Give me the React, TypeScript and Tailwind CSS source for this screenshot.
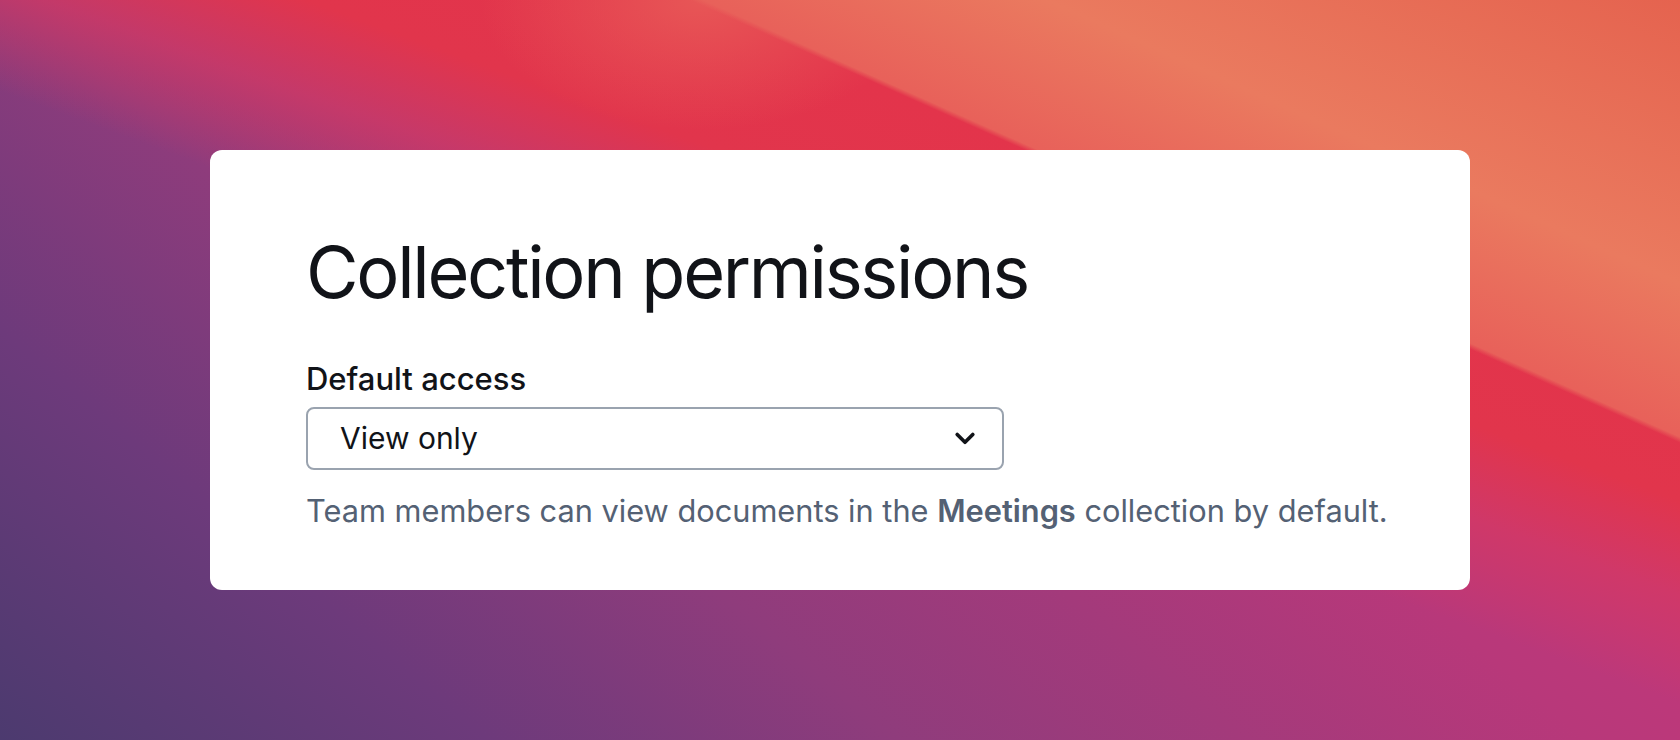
const wallpaper =
  'bg-[linear-gradient(24.1deg,transparent_70.3%,#e8615a_70.7%,#ea7a5f_81%,#e5634f_100%),radial-gradient(ellipse_220px_130px_at_700px_0px,rgba(232,92,88,0.85),rgba(232,92,88,0)),linear-gradient(20deg,rgba(222,53,82,0)_48%,rgba(214,56,98,0.72)_56%,#e1354c_63%,#e3344b_72%),linear-gradient(40deg,#4c3a6f_0%,#6d3a7b_19%,#8f3c7c_35%,#b8387a_62%,#c8387a_80%,#d0386c_100%)]';

const App = () => {
  return (
    <div
      className={`flex h-[740px] w-full items-center justify-center ${wallpaper} font-['Inter',sans-serif]`}
    >
      <div className="flex w-[1260px] flex-col rounded-xl bg-white px-24 pt-[86px] pb-[60px]">
        <h1 className="text-[72px] leading-none font-normal tracking-[-0.032em] text-[#111318]">
          Collection permissions
        </h1>

        <label className="mt-[52px] text-[31px] leading-tight font-medium text-[#111318]">
          Default access
        </label>

        <div className="mt-[8px] flex h-[63px] w-[698px] items-center justify-between rounded-lg border-2 border-[#9aa3af] pr-[20px] pl-[32px]">
          <span className="text-[30px] text-[#111318]">View only</span>
          <svg
            viewBox="0 0 24 24"
            className="h-[34px] w-[34px] text-[#111318]"
            fill="none"
            stroke="currentColor"
            strokeWidth={2.6}
            strokeLinecap="round"
            strokeLinejoin="round"
          >
            <path d="m6.5 9.5 5.5 5.5 5.5-5.5" />
          </svg>
        </div>

        <p className="mt-[22px] text-[30.75px] leading-tight whitespace-nowrap text-[#546174]">
          Team members can view documents in the{' '}
          <span className="font-semibold">Meetings</span> collection by
          default.
        </p>
      </div>
    </div>
  );
};

export default App;
